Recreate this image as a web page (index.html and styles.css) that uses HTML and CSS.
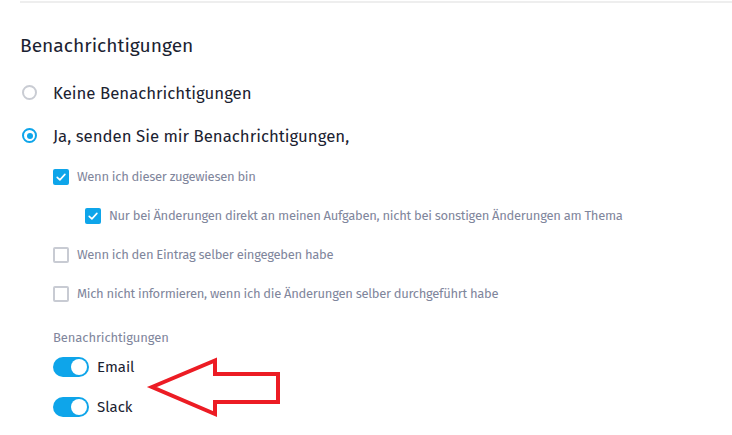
FILE: index.html
```html
<!DOCTYPE html>
<html lang="de">
<head>
<meta charset="utf-8">
<link rel="stylesheet" href="styles.css">
</head>
<body>
<div class="page">
  <div class="topline"></div>
  <h2 class="title">Benachrichtigungen</h2>
  <div class="radio-row"><span class="radio"></span><span class="radio-label">Keine Benachrichtigungen</span></div>
  <div class="radio-row"><span class="radio checked"></span><span class="radio-label">Ja, senden Sie mir Benachrichtigungen,</span></div>
  <div class="opts">
    <div class="check-row"><span class="check checked"><svg viewBox="0 0 16 16" width="16" height="16"><path d="M4.2 8.3 L6.9 10.9 L11.9 5.4" fill="none" stroke="#fff" stroke-width="1.6" stroke-linecap="round" stroke-linejoin="round"/></svg></span><span class="check-label">Wenn ich dieser zugewiesen bin</span></div>
    <div class="check-row sub"><span class="check checked"><svg viewBox="0 0 16 16" width="16" height="16"><path d="M4.2 8.3 L6.9 10.9 L11.9 5.4" fill="none" stroke="#fff" stroke-width="1.6" stroke-linecap="round" stroke-linejoin="round"/></svg></span><span class="check-label">Nur bei Änderungen direkt an meinen Aufgaben, nicht bei sonstigen Änderungen am Thema</span></div>
    <div class="check-row"><span class="check"></span><span class="check-label">Wenn ich den Eintrag selber eingegeben habe</span></div>
    <div class="check-row"><span class="check"></span><span class="check-label">Mich nicht informieren, wenn ich die Änderungen selber durchgeführt habe</span></div>
    <div class="small-label">Benachrichtigungen</div>
    <div class="toggle-row"><span class="toggle"><span class="knob"></span></span><span class="toggle-label">Email</span></div>
    <div class="toggle-row"><span class="toggle"><span class="knob"></span></span><span class="toggle-label">Slack</span></div>
  </div>
  <svg class="arrow" width="732" height="435" viewBox="0 0 732 435">
    <polygon points="152,386 215,359.5 215,373 278,373 278,401 215,401 215,413" fill="none" stroke="#ec1c24" stroke-width="4" stroke-linejoin="miter"/>
  </svg>
</div>
</body>
</html>
```

FILE: styles.css
```css
html, body {
  margin: 0;
  padding: 0;
  background: #fff;
}
body {
  font-family: "Fira Sans", Lato, "Liberation Sans", sans-serif;
  color: #1d2433;
  width: 732px;
  height: 435px;
  overflow: hidden;
}
.page {
  position: relative;
  padding-left: 20px;
  height: 435px;
}
.topline {
  height: 0;
  border-top: 2px solid #eeeeee;
  margin-top: 1px;
}
.title {
  margin: 30px 0 0;
  height: 26px;
  line-height: 26px;
  font-size: 19.2px;
  font-weight: 400;
  color: #1b2231;
}
.radio-row {
  height: 43px;
  display: flex;
  align-items: center;
}
.title + .radio-row {
  margin-top: 12px;
}
.radio {
  box-sizing: border-box;
  width: 15px;
  height: 15px;
  border: 2px solid #c9ccd3;
  border-radius: 50%;
  margin-left: 2px;
  margin-right: 16px;
  flex: none;
  position: relative;
}
.radio.checked {
  border-color: #0ea5ea;
}
.radio.checked::after {
  content: "";
  position: absolute;
  left: 2.5px;
  top: 2.5px;
  width: 6px;
  height: 6px;
  border-radius: 50%;
  background: #0ea5ea;
}
.radio-label {
  font-size: 16.8px;
  color: #1b2231;
}
.opts {
  padding-left: 33px;
}
.check-row {
  height: 39px;
  display: flex;
  align-items: center;
}
.check-row.sub {
  padding-left: 32px;
}
.check {
  box-sizing: border-box;
  width: 16px;
  height: 16px;
  border: 2px solid #c8cbd3;
  border-radius: 2px;
  margin-right: 8px;
  flex: none;
  display: flex;
}
.check.checked {
  border: none;
  background: #0ea5ea;
  border-radius: 2px;
}
.check-label {
  font-size: 13px;
  letter-spacing: -0.3px;
  color: #7f869c;
}
.small-label {
  margin-top: 15px;
  height: 19px;
  line-height: 20px;
  font-size: 13px;
  letter-spacing: -0.1px;
  color: #7f869c;
}
.toggle-row {
  height: 40px;
  display: flex;
  align-items: center;
}
.toggle {
  box-sizing: border-box;
  width: 36px;
  height: 20px;
  border-radius: 10px;
  background: #0ea5ea;
  padding: 2px 2px 2px 18px;
  margin-right: 8px;
  flex: none;
  display: flex;
}
.knob {
  width: 16px;
  height: 16px;
  border-radius: 50%;
  background: #fff;
}
.toggle-label {
  font-size: 15px;
  color: #1b2231;
}
.arrow {
  position: absolute;
  left: 0;
  top: 0;
  pointer-events: none;
}
```
